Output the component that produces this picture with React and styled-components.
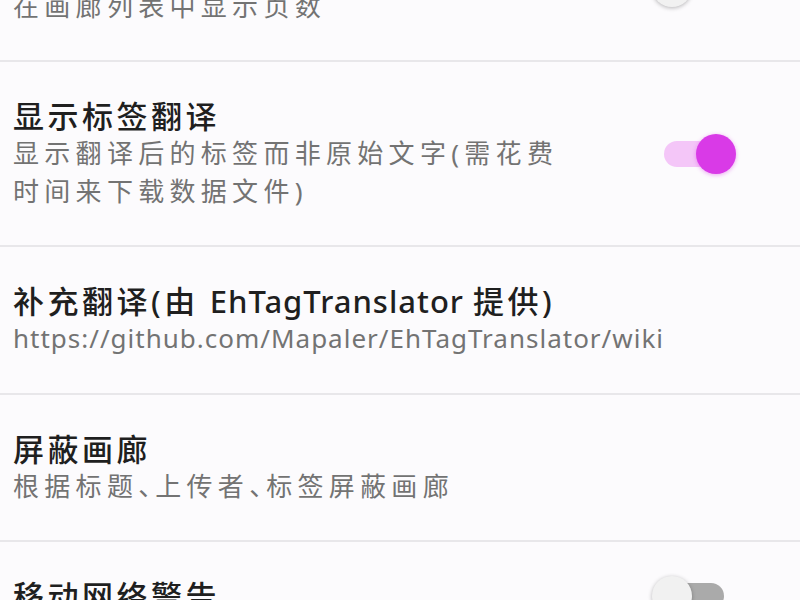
import React from "react";
import styled, { createGlobalStyle } from "styled-components";

const GlobalStyle = createGlobalStyle`
  html, body {
    margin: 0;
    padding: 0;
    background: #fcfbfd;
    overflow: hidden;
  }
  body {
    font-family: "Noto Sans", "Noto Sans CJK SC", sans-serif;
  }
`;

const Screen = styled.div`
  width: 800px;
  height: 600px;
  overflow: hidden;
  background: #fcfbfd;
`;

const List = styled.div`
  display: flex;
  flex-direction: column;
  margin-top: -85.5px;
`;

const Row = styled.div`
  display: flex;
  align-items: center;
  justify-content: space-between;
  gap: 24px;
  padding: 35px 0 35px 13px;
  border-bottom: 2px solid #e8e7ea;
`;

const TextBlock = styled.div`
  display: flex;
  flex-direction: column;
  max-width: 560px;
`;

const Title = styled.div`
  font-size: 31px;
  line-height: 38px;
  font-weight: 500;
  color: #1f1f1f;
  letter-spacing: 3.5px;
  white-space: nowrap;
`;

const Latin = styled.span`
  letter-spacing: 1px;
  margin-left: 2px;
`;

const Subtitle = styled.div`
  font-size: 26px;
  line-height: 37.5px;
  color: #737373;
  letter-spacing: ${(p) => (p.$latin ? "1px" : "5.3px")};
  white-space: ${(p) => (p.$latin ? "nowrap" : "normal")};
`;

const Comma = styled.span`
  letter-spacing: -12px;
  margin-right: 3px;
`;

const Switch = styled.div`
  position: relative;
  flex: none;
  width: 60px;
  height: 26px;
  margin-right: 76px;
  border-radius: 13px;
  background: ${(p) => (p.$on ? "#f4c6f8" : "#aaaaaa")};
`;

const Thumb = styled.span`
  position: absolute;
  top: -7px;
  left: ${(p) => (p.$on ? "32px" : "-12px")};
  width: 40px;
  height: 40px;
  border-radius: 50%;
  background: ${(p) => (p.$on ? "#d93ae7" : "#f1f1f1")};
  box-shadow: ${(p) =>
    p.$on
      ? "0 1px 4px rgba(217, 58, 231, 0.45)"
      : "0 1px 4px rgba(0, 0, 0, 0.28)"};
`;

const items = [
  { key: "pages", title: "显示页数", sub: "在画廊列表中显示页数", toggle: false },
  {
    key: "tagtr",
    title: "显示标签翻译",
    sub: "显示翻译后的标签而非原始文字(需花费时间来下载数据文件)",
    toggle: true,
  },
  {
    key: "ehtag",
    title: (
      <>
        补充翻译(由<Latin> EhTagTranslator </Latin>提供)
      </>
    ),
    sub: "https://github.com/Mapaler/EhTagTranslator/wiki",
    latin: true,
  },
  {
    key: "block",
    title: "屏蔽画廊",
    sub: (
      <>
        根据标题<Comma>、</Comma>上传者<Comma>、</Comma>标签屏蔽画廊
      </>
    ),
  },
  { key: "mobile", title: "移动网络警告", toggle: false },
];

export default function App() {
  return (
    <Screen>
      <GlobalStyle />
      <List>
        {items.map((it) => (
          <Row key={it.key}>
            <TextBlock>
              <Title>{it.title}</Title>
              {it.sub && <Subtitle $latin={it.latin}>{it.sub}</Subtitle>}
            </TextBlock>
            {it.toggle !== undefined && (
              <Switch $on={it.toggle}>
                <Thumb $on={it.toggle} />
              </Switch>
            )}
          </Row>
        ))}
      </List>
    </Screen>
  );
}
